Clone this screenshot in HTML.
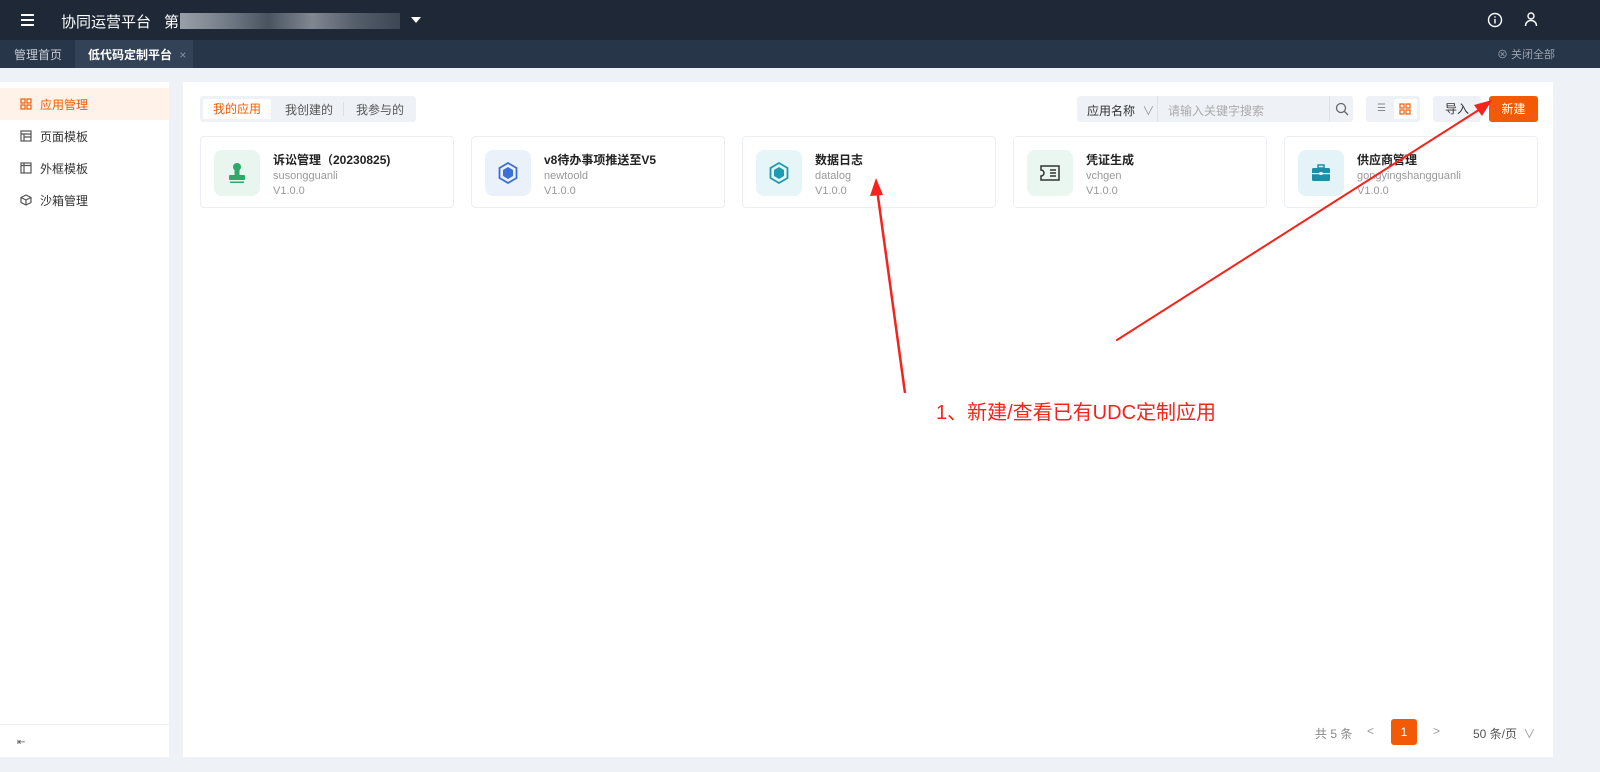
<!DOCTYPE html>
<html><head><meta charset="utf-8"><style>
*{box-sizing:border-box;margin:0;padding:0}
body{width:1600px;height:772px;overflow:hidden;background:#eef1f5;font-family:"Liberation Sans","Noto Sans CJK SC",sans-serif;font-size:12px;color:#333;position:relative}
.top{position:absolute;left:0;top:0;width:1600px;height:40px;background:#1e2836;color:#fff}
.tabs{position:absolute;left:0;top:40px;width:1600px;height:28px;background:#28364a;color:#c8ced6}
.side{position:absolute;left:0;top:82px;width:169px;height:675px;background:#fff}
.main{position:absolute;left:183px;top:82px;width:1370px;height:675px;background:#fff}
.mi{height:32px;display:flex;align-items:center;padding-left:20px;font-size:12px;color:#333}
.mi svg{margin-right:8px}
.card{position:absolute;top:54px;width:254px;height:72px;border:1px solid #ebeef2;border-radius:4px;background:#fff}
.ic{position:absolute;left:13px;top:13px;width:46px;height:46px;border-radius:8px;display:flex;align-items:center;justify-content:center}
.t{position:absolute;left:72px;top:14px;font-size:12px;font-weight:bold;color:#222}
.s{position:absolute;left:72px;top:33px;font-size:11px;color:#999}
.v{position:absolute;left:72px;top:48px;font-size:11px;color:#999}
</style></head><body>
<div class="top">
<div style="position:absolute;left:21px;top:14px;width:13px">
<div style="height:2px;background:#fff;margin-bottom:3px"></div><div style="height:2px;background:#fff;margin-bottom:3px"></div><div style="height:2px;background:#fff"></div></div>
<div style="position:absolute;left:61px;top:11px;font-size:15px">协同运营平台</div>
<div style="position:absolute;left:164px;top:11px;font-size:15px">第</div>
<div style="position:absolute;left:180px;top:13px;width:220px;height:16px;background:linear-gradient(90deg,#cfd3d8,#9aa3ad,#5c6672,#aab0b8,#6b7480,#4a5360);opacity:.7"></div>
<div style="position:absolute;left:411px;top:17px;width:0;height:0;border-left:5px solid transparent;border-right:5px solid transparent;border-top:6px solid #fff"></div>
<svg style="position:absolute;left:1487px;top:12px" width="16" height="16" viewBox="0 0 16 16"><circle cx="8" cy="8" r="6.5" fill="none" stroke="#fff" stroke-width="1.4"/><rect x="7.3" y="7" width="1.4" height="4.5" fill="#fff"/><rect x="7.3" y="4.3" width="1.4" height="1.4" fill="#fff"/></svg>
<svg style="position:absolute;left:1523px;top:11px" width="16" height="16" viewBox="0 0 16 16"><circle cx="8" cy="5" r="3" fill="none" stroke="#fff" stroke-width="1.4"/><path d="M2.5 15c0-3.5 2.5-5.5 5.5-5.5s5.5 2 5.5 5.5" fill="none" stroke="#fff" stroke-width="1.4"/></svg>
</div>
<div class="tabs">
<div style="position:absolute;left:14px;top:6px;font-size:12px">管理首页</div>
<div style="position:absolute;left:75px;top:0;width:118px;height:28px;background:#334257;color:#fff;font-weight:bold;padding:6px 0 0 13px">低代码定制平台 <span style="color:#8894a2;font-weight:normal;margin-left:4px">×</span></div>
<div style="position:absolute;left:1497px;top:6px;font-size:11px;color:#9aa3ad">⊗ 关闭全部</div>
</div>
<div class="side">
<div class="mi" style="background:#fff2e8;color:#f25a05;margin-top:6px"><svg width="12" height="12" viewBox="0 0 12 12" fill="none" stroke="#f25a05" stroke-width="1.2"><rect x="1" y="1" width="4" height="4"/><rect x="7" y="1" width="4" height="4"/><rect x="1" y="7" width="4" height="4"/><rect x="7" y="7" width="4" height="4"/></svg>应用管理</div>
<div class="mi"><svg width="12" height="12" viewBox="0 0 12 12" fill="none" stroke="#555" stroke-width="1.2"><rect x="1" y="1" width="10" height="10"/><path d="M1 4h10M4 4v7M4 7h7"/></svg>页面模板</div>
<div class="mi"><svg width="12" height="12" viewBox="0 0 12 12" fill="none" stroke="#555" stroke-width="1.2"><rect x="1" y="1" width="10" height="10"/><path d="M4 1v10M1 3.5h10"/></svg>外框模板</div>
<div class="mi"><svg width="12" height="12" viewBox="0 0 12 12" fill="none" stroke="#555" stroke-width="1.2"><path d="M6 1l5 2.5v5L6 11 1 8.5v-5zM1 3.5L6 6l5-2.5M6 6v5"/></svg>沙箱管理</div>
<div style="position:absolute;left:0;top:642px;width:169px;border-top:1px solid #eee"></div>
<div style="position:absolute;left:17px;top:655px;font-size:10px;color:#555">⇤</div>
</div>
<div class="main">
<div style="position:absolute;left:17px;top:14px;width:216px;height:26px;background:#eef1f5;border-radius:3px">
<div style="position:absolute;left:3px;top:3px;width:68px;height:20px;background:#fff;border-radius:2px;color:#f25a05;text-align:center;line-height:20px">我的应用</div>
<div style="position:absolute;left:85px;top:5px;color:#555">我创建的</div>
<div style="position:absolute;left:143px;top:6px;width:1px;height:14px;background:#dcdfe4"></div>
<div style="position:absolute;left:156px;top:5px;color:#555">我参与的</div>
</div>
<div style="position:absolute;left:894px;top:14px;width:276px;height:26px;background:#eef1f5;border-radius:3px">
<div style="position:absolute;left:10px;top:6px;color:#333">应用名称 <span style="color:#999;margin-left:4px">∨</span></div>
<div style="position:absolute;left:80px;top:0;width:1px;height:26px;background:#dfe3e8"></div>
<div style="position:absolute;left:91px;top:6px;color:#aaa">请输入关键字搜索</div>
<div style="position:absolute;left:252px;top:0;width:1px;height:26px;background:#dfe3e8"></div>
<svg style="position:absolute;left:258px;top:6px" width="14" height="14" viewBox="0 0 14 14" fill="none" stroke="#666" stroke-width="1.3"><circle cx="6" cy="6" r="4.5"/><path d="M9.5 9.5L13 13"/></svg>
</div>
<div style="position:absolute;left:1183px;top:14px;width:54px;height:26px;background:#eef1f5;border-radius:3px">
<div style="position:absolute;left:11px;top:7px;color:#888;font-size:10px">☰</div>
<div style="position:absolute;left:28px;top:3px;width:23px;height:20px;background:#fff"><svg style="margin:4px 0 0 5px" width="12" height="12" viewBox="0 0 12 12" fill="none" stroke="#f25a05" stroke-width="1.2"><rect x="1" y="1" width="4" height="4"/><rect x="7" y="1" width="4" height="4"/><rect x="1" y="7" width="4" height="4"/><rect x="7" y="7" width="4" height="4"/></svg></div>
</div>
<div style="position:absolute;left:1250px;top:14px;width:48px;height:26px;background:#eef1f5;border-radius:3px;text-align:center;line-height:26px;color:#333">导入</div>
<div style="position:absolute;left:1306px;top:14px;width:49px;height:26px;background:#f25a05;border-radius:3px;text-align:center;line-height:26px;color:#fff">新建</div>

<div class="card" style="left:17px"><div class="ic" style="background:#e8f6ef"><svg width="20" height="22" viewBox="0 0 20 22"><circle cx="10" cy="5" r="4" fill="#2fa86a"/><rect x="7.5" y="7" width="5" height="6" fill="#2fa86a"/><rect x="2" y="13" width="16" height="5" rx="1" fill="#2fa86a"/><rect x="3" y="19.5" width="14" height="1.5" fill="#2fa86a"/></svg></div><div class="t">诉讼管理（20230825)</div><div class="s">susongguanli</div><div class="v">V1.0.0</div></div>
<div class="card" style="left:288px"><div class="ic" style="background:#ebf1fb"><svg width="20" height="22" viewBox="0 0 20 22"><path d="M10 1l8.5 5v10L10 21 1.5 16V6z" fill="none" stroke="#3d6fd6" stroke-width="1.8"/><path d="M10 5l5 3v6l-5 3-5-3V8z" fill="#3d6fd6"/></svg></div><div class="t">v8待办事项推送至V5</div><div class="s">newtoold</div><div class="v">V1.0.0</div></div>
<div class="card" style="left:559px"><div class="ic" style="background:#e6f5f7"><svg width="20" height="22" viewBox="0 0 20 22"><path d="M10 1l8.5 5v10L10 21 1.5 16V6z" fill="none" stroke="#1d9bb0" stroke-width="1.8"/><path d="M10 5l5 3v6l-5 3-5-3V8z" fill="#1d9bb0"/></svg></div><div class="t">数据日志</div><div class="s">datalog</div><div class="v">V1.0.0</div></div>
<div class="card" style="left:830px"><div class="ic" style="background:#eaf6f0"><svg width="20" height="18" viewBox="0 0 20 18" fill="none" stroke="#333" stroke-width="1.5"><path d="M1 2h18v14H1v-4a3 3 0 000-6z"/><path d="M10 6h6M10 9h6M10 12h6"/></svg></div><div class="t">凭证生成</div><div class="s">vchgen</div><div class="v">V1.0.0</div></div>
<div class="card" style="left:1101px"><div class="ic" style="background:#e4f3f7"><svg width="20" height="18" viewBox="0 0 20 18"><rect x="7" y="1" width="6" height="3" fill="none" stroke="#1a8fa6" stroke-width="1.5"/><rect x="1" y="4" width="18" height="13" rx="1.5" fill="#1a8fa6"/><rect x="1" y="9" width="18" height="1.2" fill="#e4f3f7"/><rect x="8.5" y="8" width="3" height="3" fill="#e4f3f7"/></svg></div><div class="t">供应商管理</div><div class="s">gongyingshangguanli</div><div class="v">V1.0.0</div></div>

<div style="position:absolute;left:1132px;top:643px;color:#888">共 5 条</div>
<div style="position:absolute;left:1184px;top:642px;color:#999">&lt;</div>
<div style="position:absolute;left:1208px;top:637px;width:26px;height:26px;background:#f25a05;border-radius:3px;color:#fff;text-align:center;line-height:26px">1</div>
<div style="position:absolute;left:1250px;top:642px;color:#999">&gt;</div>
<div style="position:absolute;left:1290px;top:643px;color:#555">50 条/页 <span style="color:#999;margin-left:3px">∨</span></div>
</div>
<svg style="position:absolute;left:0;top:0" width="1600" height="772">
<path d="M905 393L876 182" stroke="#f5231b" stroke-width="2.5"/>
<path d="M876 178l-6 18 13-1z" fill="#f5231b"/>
<path d="M1117 340L1485 106" stroke="#f5231b" stroke-width="2" stroke-linecap="round"/>
<path d="M1492 100l-18 5 8 11z" fill="#f5231b"/>
</svg>
<div style="position:absolute;left:936px;top:396px;font-size:20px;color:#f5231b">1、新建/查看已有UDC定制应用</div>
</body></html>
